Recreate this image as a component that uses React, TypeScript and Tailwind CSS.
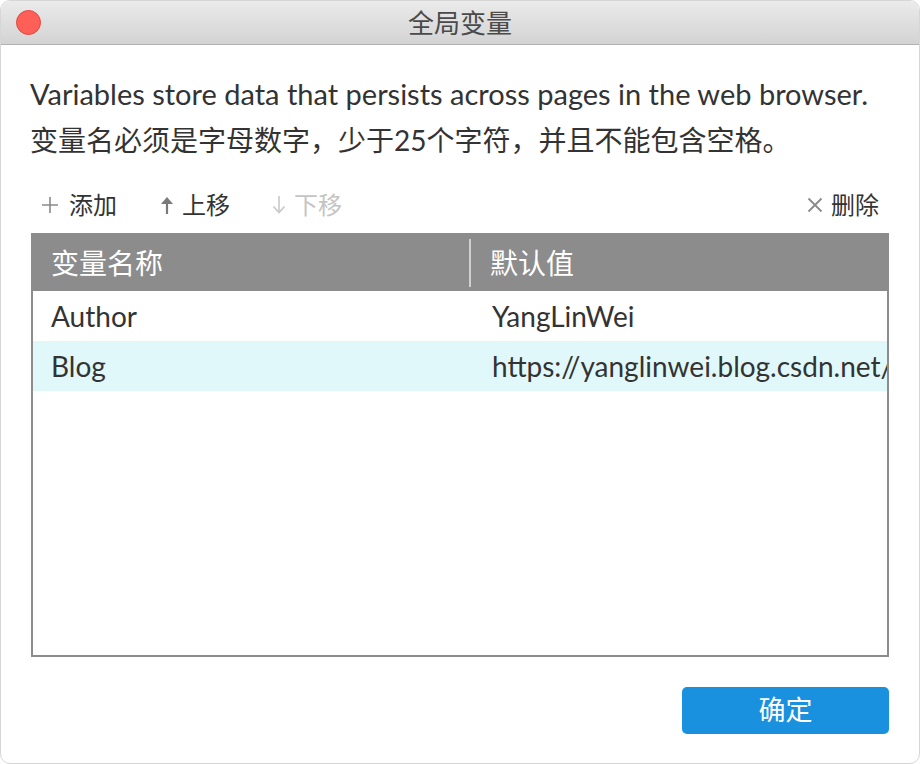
import React from "react";

const font = { fontFamily: '"Lato", "Noto Sans CJK SC", sans-serif' };

function PlusIcon() {
  return (
    <svg width="18" height="18" viewBox="0 0 18 18" className="shrink-0">
      <path d="M9 1v16M1 9h16" stroke="#8a8a8a" strokeWidth="1.6" />
    </svg>
  );
}
function UpIcon({ color }: { color: string }) {
  return (
    <svg width="14" height="20" viewBox="0 0 14 20" className="shrink-0">
      <path d="M7 5v14" stroke={color} strokeWidth="2.2" />
      <path d="M1 9L7 2l6 7z" fill={color} />
    </svg>
  );
}
function DownIcon({ color }: { color: string }) {
  return (
    <svg width="14" height="20" viewBox="0 0 14 20" className="shrink-0">
      <path d="M7 1v16" stroke={color} strokeWidth="1.6" />
      <path d="M1.5 11.5L7 17.5l5.5-6" fill="none" stroke={color} strokeWidth="1.6" />
    </svg>
  );
}
function XIcon() {
  return (
    <svg width="16" height="16" viewBox="0 0 16 16" className="shrink-0">
      <path d="M1.5 1.5l13 13M14.5 1.5l-13 13" stroke="#8a8a8a" strokeWidth="1.8" />
    </svg>
  );
}

export default function App() {
  return (
    <div className="w-[920px] h-[764px] bg-white" style={font}>
      <div className="w-[920px] h-[764px] rounded-[10px] overflow-hidden border border-[#d6d6d6] bg-white flex flex-col">
        <div className="relative h-[44px] shrink-0 bg-gradient-to-b from-[#ebebeb] to-[#d3d3d3] border-b border-[#b1b1b1] flex items-center justify-center">
          <div className="absolute left-[15px] top-[9px] w-[25px] h-[25px] rounded-full bg-[#fe5f57] border border-[#e2463f]" />
          <span className="text-[26px] text-[#4a4a4a] leading-none">全局变量</span>
        </div>
        <div className="flex flex-col px-[29px] pt-[26px]">
          <p className="text-[29px] leading-[46px] text-[#333333] whitespace-nowrap">
            Variables store data that persists across pages in the web browser.
          </p>
          <p className="text-[28px] leading-[46px] text-[#333333] whitespace-nowrap">
            变量名必须是字母数字，少于25个字符，并且不能包含空格。
          </p>
          <div className="mt-[22px] h-[40px] flex items-center pl-[11px] text-[24px] text-[#333333]">
            <div className="flex items-center gap-[10px]">
              <PlusIcon />
              <span>添加</span>
            </div>
            <div className="flex items-center gap-[8px] ml-[43px]">
              <UpIcon color="#7a7a7a" />
              <span>上移</span>
            </div>
            <div className="flex items-center gap-[8px] ml-[42px] text-[#c4c4c4]">
              <DownIcon color="#c8c8c8" />
              <span>下移</span>
            </div>
            <div className="flex items-center gap-[8px] ml-auto mr-[11px]">
              <XIcon />
              <span>删除</span>
            </div>
          </div>
          <div className="mt-[8px] ml-[1px] w-[858px] h-[424px] border-2 border-[#8c8c8c] overflow-hidden flex flex-col">
            <div className="h-[56px] shrink-0 bg-[#8c8c8c] flex items-center text-white text-[28px]">
              <div className="w-[438px] pl-[18px] flex items-center border-r-2 border-[#d0d0d0] h-[48px]">变量名称</div>
              <div className="pl-[19px]">默认值</div>
            </div>
            <div className="h-[50px] flex items-center text-[28px] text-[#333333] bg-white whitespace-nowrap">
              <div className="w-[440px] pl-[18px] shrink-0">Author</div>
              <div className="pl-[19px]">YangLinWei</div>
            </div>
            <div className="h-[50px] flex items-center text-[28px] text-[#333333] bg-[#e1f8fa] whitespace-nowrap">
              <div className="w-[440px] pl-[18px] shrink-0">Blog</div>
              <div className="pl-[19px]">https://yanglinwei.blog.csdn.net/</div>
            </div>
          </div>
          <div className="flex justify-end mt-[30px] pr-[1px]">
            <button className="w-[207px] h-[47px] rounded-[5px] bg-[#1a91de] text-white text-[27px] flex items-center justify-center">
              确定
            </button>
          </div>
        </div>
      </div>
    </div>
  );
}
